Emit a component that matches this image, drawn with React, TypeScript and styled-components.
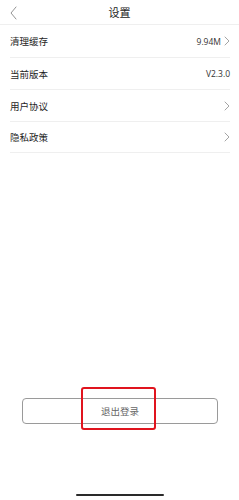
import React from "react";
import styled, { createGlobalStyle } from "styled-components";

const Global = createGlobalStyle`
  html, body { margin: 0; padding: 0; background: #fff; }
  body { font-family: "Noto Sans CJK SC", "Noto Sans", sans-serif; }
`;

const Page = styled.div`
  position: relative;
  width: 239px;
  height: 500px;
  display: flex;
  flex-direction: column;
  background: #fff;
  overflow: hidden;
`;

const Header = styled.div`
  height: 25px;
  flex: none;
  display: grid;
  grid-template-columns: 40px 1fr 40px;
  align-items: center;
  border-bottom: 1px solid #efefef;
  box-sizing: border-box;
`;

const BackButton = styled.div`
  display: flex;
  align-items: center;
  padding-left: 10px;
  height: 25px;
`;

const Title = styled.div`
  text-align: center;
  font-size: 11px;
  color: #222;
  line-height: 25px;
`;

const List = styled.div`
  display: flex;
  flex-direction: column;
  padding: 0 9px 0 10px;
`;

const Row = styled.div<{ $h: number }>`
  height: ${(p) => p.$h}px;
  display: flex;
  align-items: center;
  justify-content: space-between;
  border-bottom: 1px solid #efefef;
  box-sizing: border-box;
`;

const Label = styled.span`
  font-size: 9.5px;
  color: #1e1e1e;
`;

const Right = styled.div`
  display: flex;
  align-items: center;
  gap: 3px;
`;

const Value = styled.span`
  font-family: "Open Sans", "Noto Sans", sans-serif;
  font-size: 8.5px;
  color: #333;
`;

const Spacer = styled.div`
  flex: 1;
`;

const ButtonWrap = styled.div`
  position: relative;
  padding: 0 21px 0 22px;
`;

const LogoutButton = styled.div`
  height: 26px;
  border: 1px solid #9a9a9a;
  border-radius: 4px;
  box-sizing: border-box;
  display: flex;
  align-items: center;
  justify-content: center;
  font-size: 9.5px;
  color: #666;
`;

const Highlight = styled.div`
  position: absolute;
  left: 81px;
  top: -11px;
  width: 75px;
  height: 43px;
  border: 2px solid #e0141e;
  border-radius: 3px;
  box-sizing: border-box;
`;

const Bottom = styled.div`
  height: 76px;
  flex: none;
  display: flex;
  align-items: flex-end;
  justify-content: center;
  padding-bottom: 4px;
  box-sizing: border-box;
`;

const HomeIndicator = styled.div`
  width: 88px;
  height: 2px;
  border-radius: 1px;
  background: #2a2a2a;
`;

const Chevron = () => (
  <svg width="6" height="10" viewBox="0 0 6 10" fill="none">
    <path d="M1 1l4 4-4 4" stroke="#9a9a9a" strokeWidth="0.9" strokeLinecap="round" strokeLinejoin="round" />
  </svg>
);

const Back = () => (
  <svg width="7" height="14" viewBox="0 0 7 14" fill="none">
    <path d="M6 1L1 7l5 6" stroke="#888" strokeWidth="0.9" strokeLinecap="round" strokeLinejoin="round" />
  </svg>
);

export default function App() {
  return (
    <>
      <Global />
      <Page>
        <Header>
          <BackButton>
            <Back />
          </BackButton>
          <Title>设置</Title>
          <div />
        </Header>
        <List>
          <Row $h={33}>
            <Label>清理缓存</Label>
            <Right>
              <Value>9.94M</Value>
              <Chevron />
            </Right>
          </Row>
          <Row $h={32}>
            <Label>当前版本</Label>
            <Right>
              <Value>V2.3.0</Value>
            </Right>
          </Row>
          <Row $h={32}>
            <Label>用户协议</Label>
            <Right>
              <Chevron />
            </Right>
          </Row>
          <Row $h={31}>
            <Label>隐私政策</Label>
            <Right>
              <Chevron />
            </Right>
          </Row>
        </List>
        <Spacer />
        <ButtonWrap>
          <LogoutButton>退出登录</LogoutButton>
          <Highlight />
        </ButtonWrap>
        <Bottom>
          <HomeIndicator />
        </Bottom>
      </Page>
    </>
  );
}
